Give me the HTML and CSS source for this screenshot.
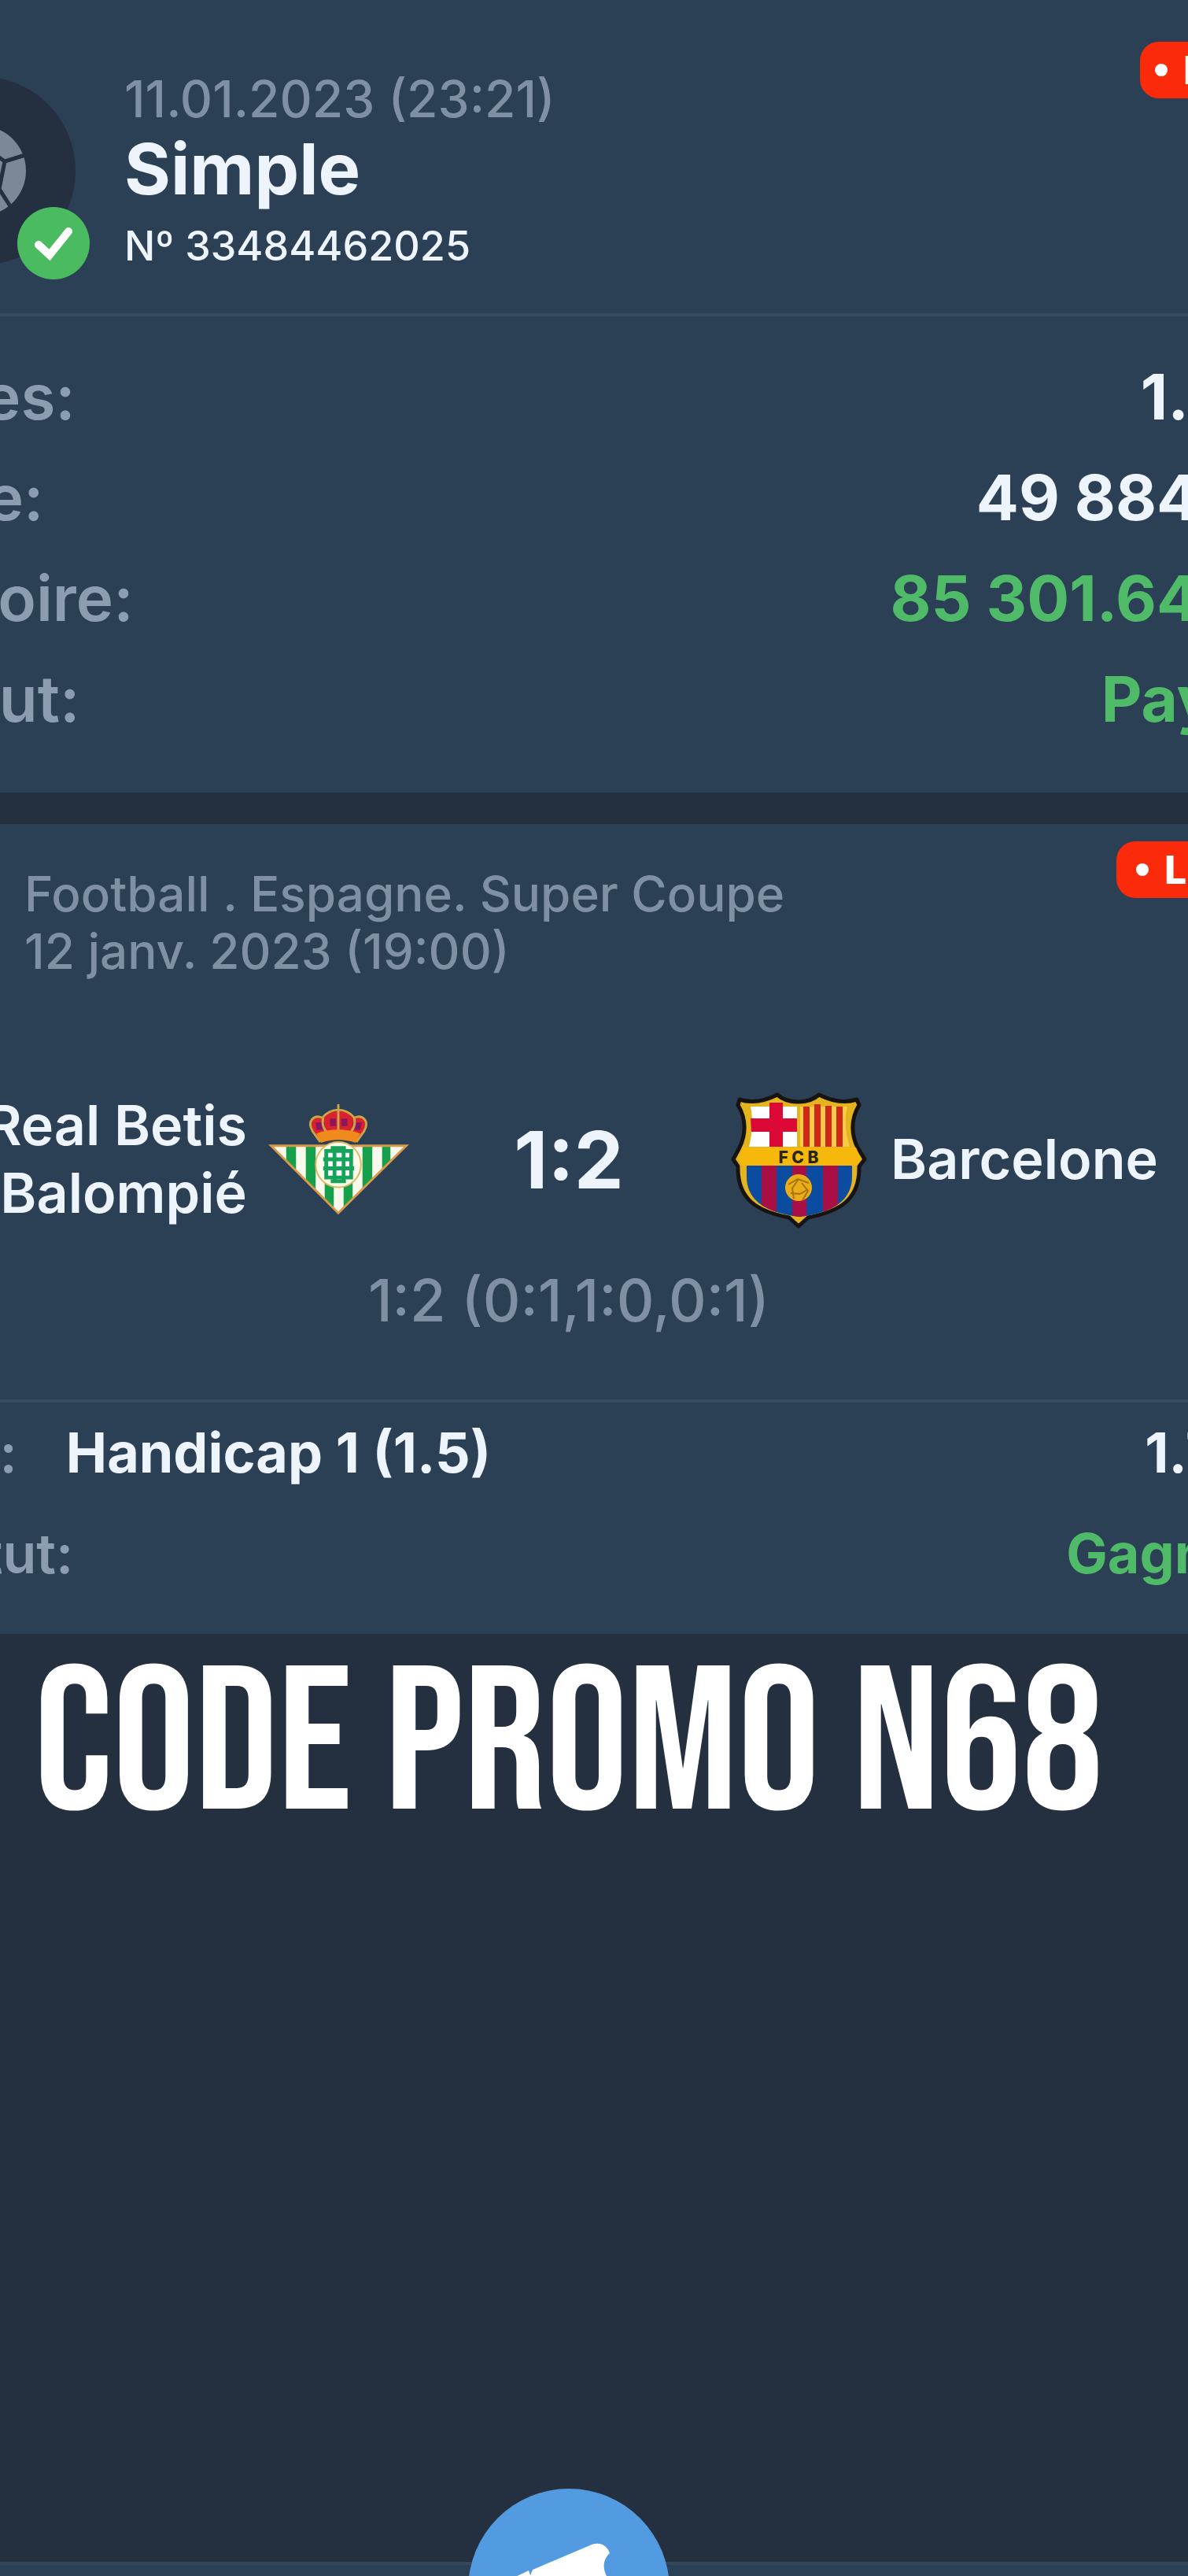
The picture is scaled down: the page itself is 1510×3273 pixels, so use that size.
FILE: index.html
```
<!DOCTYPE html>
<html lang="fr">
<head>
	<meta charset="UTF-8">
	<meta name="viewport" content="width=device-width, initial-scale=1.0">
	<title>Simple 33484462025</title>
	<link rel="stylesheet" href="styles.css">
</head>

<body>
	<div class="screen">
		<main>
			<section class="card">
				<span class="badge"><i></i>Live</span>
				<header class="ticket">
					<div class="avatar">
						<svg class="ball" viewBox="0 0 116 116">
							<circle cx="58" cy="58" r="57" fill="#7c8896" />
							<path d="M58 25l30 21-7 35H35l-7-35zM58 25V0M88 46l26-8M81 81l14 22M35 81l-14 22M28 46L2 38" fill="none" stroke="#243040" stroke-width="5" />
						</svg>
						<svg class="check" viewBox="0 0 92 92">
							<circle cx="46" cy="46" r="46" fill="#4abb60" />
							<path d="M27 48l14 13 24-30" fill="none" stroke="#fff" stroke-width="10" stroke-linecap="round" />
						</svg>
					</div>
					<div>
						<p class="date">11.01.2023 (23:21)</p>
						<h1>Simple</h1>
						<p class="number">Nº 33484462025</p>
					</div>
				</header>
				<dl class="summary">
					<div><dt>Cotes:</dt><dd>1.71</dd></div>
					<div><dt>Mise:</dt><dd>49 884 F</dd></div>
					<div><dt>Victoire:</dt><dd class="win">85 301.64 F</dd></div>
					<div><dt>Statut:</dt><dd class="win">Payé</dd></div>
				</dl>
			</section>

			<section class="card event">
				<span class="badge"><i></i>Live</span>
				<p class="league">Football . Espagne. Super Coupe<br>12 janv. 2023 (19:00)</p>
				<div class="match">
					<div class="team home">
						<span>Real Betis<br>Balompié</span>
						<svg class="crest" viewBox="-5 -2 200 200">
							<defs>
								<clipPath id="tri"><path d="M6 80h179l-90 89z" /></clipPath>
							</defs>
							<g clip-path="url(#tri)">
								<path d="M0 78h192v94H0z" fill="#f8f8ec" />
								<path d="M26 78h13v94H26zM52 78h13v94H52zM77 78h12v94H77zM102 78h12v94h-12zM127 78h13v94h-13zM153 78h11v94h-11z" fill="#17a04c" />
							</g>
							<path d="M6 80h179l-90 89z" fill="none" stroke="#d99a4a" stroke-width="3" />
							<path d="M71 75L61 61c-8-14 2-23 13-18 11-14 31-14 42 0 11-5 21 4 13 18l-10 14c-15-6-33-6-48 0z" fill="#d8232f" />
							<path d="M65 49h12v10H66zM84 44h8v10h-8zM99 44h8v10h-8zM114 49h12l-2 10h-10z" fill="#8a165f" />
							<path d="M71 75L61 61c-8-14 2-23 13-18 11-14 31-14 42 0 11-5 21 4 13 18l-10 14M95 25v42M75 43c-2 8 0 16 8 22M116 43c2 8 0 16-8 22" fill="none" stroke="#c9a648" stroke-width="3" />
							<path d="M66 64c18-7 40-7 58 0l-6 12c-15-5-31-5-46 0z" fill="#f08a1d" />
							<circle cx="95" cy="105" r="30" fill="#fdfbe9" stroke="#dcb862" stroke-width="2" />
							<path d="M79 87h33v35H79z" fill="#fff" stroke="#16a35a" stroke-width="5" />
							<path d="M90 82v45M102 82v45M75 98h38M75 110h41M85 83h20M85 127h20" fill="none" stroke="#16a35a" stroke-width="5" />
						</svg>
					</div>
					<strong class="score">1:2</strong>
					<div class="team">
						<svg class="crest" viewBox="0 0 192 192">
							<defs>
								<clipPath id="fcb"><path d="M29 104h134v14c0 30-24 46-67 51-43-5-67-21-67-51z" /></clipPath>
							</defs>
							<path d="M20 20c16 5 32 2 48-6 8 7 17 9 26 9s19-2 27-9c16 8 32 11 48 6l3 7c-12 20-9 40-2 54l9 15-7 9c1 42-24 57-65 65l-12 11-12-11c-41-8-66-23-65-65l-6-9 8-15c7-14 10-34-2-54z" fill="#e3b41e" stroke="#17130f" stroke-width="5" stroke-linejoin="round" />
							<path d="M34 29h59v51H32c5-20 5-36 2-51z" fill="#fff" />
							<path d="M58 24h17v56H58zM34 44h59v17H35z" fill="#dc0836" />
							<path d="M97 29h60c-4 17-2 34 3 51H97z" fill="#f7cb45" />
							<path d="M101 29h8v51h-8zM115 26h8v54h-8zM129 28h8v52h-8zM143 29h8v51h-8z" fill="#cf281b" />
							<path d="M24 81h144l6 14-5 9H23l-4-9z" fill="#f5b80b" />
							<text x="95" y="101" class="fcb">F C B</text>
							<g clip-path="url(#fcb)">
								<path d="M29 104h134v66H29z" fill="#0b4ba0" />
								<path d="M48 104h19v66H48zM87 104h18v66H87zM126 104h19v66h-19z" fill="#a90e45" />
							</g>
							<circle cx="95" cy="132" r="17" fill="#e9ad18" />
							<path d="M82 128l12-7 14 5M89 146l-2-13 8-12M100 148l7-12-8-10M85 139l12 1 10-6" fill="none" stroke="#a8720e" stroke-width="2" />
						</svg>
						<span>Barcelone</span>
					</div>
				</div>
				<p class="periods">1:2 (0:1,1:0,0:1)</p>
				<dl class="bet">
					<div><dt>Pari:</dt><dd class="pick">Handicap 1 (1.5)</dd><dd>1.71</dd></div>
					<div><dt>Statut:</dt><dd class="win">Gagné</dd></div>
				</dl>
			</section>

			<p class="promo">CODE PROMO N68</p>
		</main>

		<nav class="tabbar">
			<button class="coupon" type="button" aria-label="Coupon">
				<svg viewBox="0 0 256 256">
					<path d="M82 103l73-31c11-5 21-1 25 10-9 8-9 20-4 29l16 38-94 40-26-61z" fill="#fff" />
					<path d="M56 114l21-10 4 12-20 9zM64 133l20-8 26 62-20 8z" fill="#fff" />
				</svg>
			</button>
		</nav>
	</div>
</body>

</html>
```
FILE: styles.css
```
body {
	margin: 0;
	background: #243040;
	color: #eef4fb;
	font-family: Inter, "Liberation Sans", sans-serif;
	font-weight: 500;
}

h1, p, dl, dd {margin: 0;}

.screen {display: flex; flex-direction: column; min-height: 100vh; overflow: hidden;}
main, .tabbar {margin: 0 -140px 0 -204px;}
main {flex: 1;}

.card {position: relative; background: #2b3f55;}
.card + .card {margin-top: 40px;}

.badge {
	position: absolute;
	top: 53px;
	right: 0;
	display: flex;
	align-items: center;
	gap: 20px;
	width: 182px;
	height: 72px;
	padding-left: 19px;
	border-radius: 24px;
	background: #fb2a0a;
	color: #fff;
	font-size: 50px;
	font-weight: 800;
}
.badge i {width: 16px; height: 16px; border-radius: 50%; background: #fff;}
.event .badge {top: 22px; right: 24px; padding-left: 25px;}

.ticket {
	display: flex;
	align-items: center;
	gap: 62px;
	padding: 90px 60px 54px;
	border-bottom: 4px solid #364b61;
}
.avatar {
	position: relative;
	display: flex;
	align-items: center;
	justify-content: center;
	width: 240px;
	height: 240px;
	border-radius: 50%;
	background: #243040;
}
.ball {width: 116px; height: 116px;}
.check {position: absolute; right: -18px; bottom: -18px; width: 92px; height: 92px;}
.date {color: #8090a4; font-size: 64px; line-height: 72px;}
h1 {font-size: 90px; font-weight: 700; line-height: 106px;}
.number {margin-top: 14px; font-size: 52px; line-height: 62px;}

dl > div {display: flex; justify-content: space-between; line-height: 128px;}
dt {color: #8c9cb1; font-weight: 600;}
dd {font-weight: 700;}
dd.win {color: #4fbb69;}
.summary {padding: 38px 60px 55px 48px; font-size: 80px;}

.league {padding: 52px 0 132px 235px; color: #8090a4; font-size: 62px; line-height: 73px;}
.match {display: grid; grid-template-columns: 1fr 394px 1fr; align-items: center;}
.team {display: flex; align-items: center; gap: 20px; font-size: 70px; font-weight: 600; line-height: 86px;}
.home {justify-content: flex-end; text-align: right;}
.crest {flex: none; width: 192px; height: 192px;}
.fcb {fill: #2a2413; font-size: 21px; font-weight: 800; text-anchor: middle;}
.score {font-size: 100px; font-weight: 700; text-align: center;}
.periods {
	padding: 40px 0 83px;
	border-bottom: 4px solid #364b61;
	color: #8090a4;
	font-size: 74px;
	line-height: 86px;
	text-align: center;
}
.bet {padding: 0 72px 38px; font-size: 70px;}
.pick {flex: 1; padding-left: 62px;}

.promo {
	padding-top: 12px;
	font-family: "Bebas Neue", Roboto, sans-serif;
	color: #fff;
	font-size: 260px;
	font-weight: 400;
	line-height: 264px;
	text-align: center;
	white-space: nowrap;
}

/* bottom bar, the round button rises over it */
.tabbar {
	position: relative;
	box-sizing: border-box;
	height: 18px;
	border-top: 4px solid #34475d;
	background: #2b3f55;
}
.coupon {
	position: absolute;
	top: -97px;
	left: 50%;
	width: 256px;
	height: 256px;
	margin-left: -128px;
	padding: 0;
	border: 0;
	border-radius: 50%;
	background: #539be0;
}
.coupon svg {display: block; width: 256px; height: 256px;}
```
